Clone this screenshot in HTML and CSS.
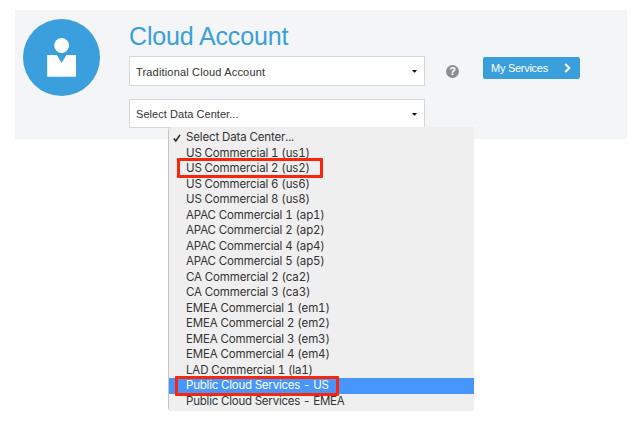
FILE: index.html
```html
<!DOCTYPE html>
<html lang="en">
<head>
<meta charset="utf-8">
<title>Cloud Account</title>
<link rel="stylesheet" href="styles.css">
</head>
<body>
<main class="panel">
  <svg class="avatar" viewBox="0 0 77 77" aria-hidden="true">
    <circle cx="38.5" cy="38.5" r="38.5" fill="#3a9fdc"/>
    <circle cx="38.6" cy="26.5" r="7.4" fill="#fff"/>
    <path d="M24.2 36H33.8L38.6 44L43.4 36H53V57.8H24.2Z" fill="#fff"/>
  </svg>
  <section class="form">
    <h1 class="title">Cloud Account</h1>
    <div class="select first"><span>Traditional Cloud Account</span><svg class="caret" viewBox="0 0 5 3"><path d="M0 0H5L3 2.5H2Z"/></svg></div>
    <div class="select second">
      <span>Select Data Center...</span><svg class="caret" viewBox="0 0 5 3"><path d="M0 0H5L3 2.5H2Z"/></svg>
      <ul class="menu">
        <li><svg class="check" viewBox="0 0 8 8"><path d="M.8 4.5L2.8 7L7 .8"/></svg><span>Select Data Center...</span></li>
        <li><span>US Commercial 1 (us1)</span></li>
        <li><span>US Commercial 2 (us2)</span><i class="mark mark-us2"></i></li>
        <li><span>US Commercial 6 (us6)</span></li>
        <li><span>US Commercial 8 (us8)</span></li>
        <li><span>APAC Commercial 1 (ap1)</span></li>
        <li><span>APAC Commercial 2 (ap2)</span></li>
        <li><span>APAC Commercial 4 (ap4)</span></li>
        <li><span>APAC Commercial 5 (ap5)</span></li>
        <li><span>CA Commercial 2 (ca2)</span></li>
        <li><span>CA Commercial 3 (ca3)</span></li>
        <li><span>EMEA Commercial 1 (em1)</span></li>
        <li><span>EMEA Commercial 2 (em2)</span></li>
        <li><span>EMEA Commercial 3 (em3)</span></li>
        <li><span>EMEA Commercial 4 (em4)</span></li>
        <li><span>LAD Commercial 1 (la1)</span></li>
        <li class="public active"><span>Public Cloud Services - US</span><i class="mark mark-public"></i></li>
        <li class="public"><span>Public Cloud Services - EMEA</span></li>
      </ul>
    </div>
  </section>
  <span class="help">?</span>
  <div class="button"><span>My Services</span><svg class="chevron" viewBox="0 0 7 10"><path d="M1.3 1L5.3 5L1.3 9"/></svg></div>
</main>
</body>
</html>
```
FILE: styles.css
```css
* { box-sizing: border-box; }
body {
  margin: 0;
  padding: 10px 7px 0 15px;
  height: 421px;
  overflow: hidden;
  background: #fff;
  font-family: "Liberation Sans", Arial, sans-serif;
  color: #333;
}
.panel {
  display: flex;
  align-items: flex-start;
  height: 129px;
  background: #f3f5f7;
}
.avatar {
  width: 77px;
  height: 77px;
  margin: 9px 29px 0 8px;
  flex: none;
}
.form { width: 296px; flex: none; }
.title {
  margin: 0;
  height: 46px;
  padding-top: 11px;
  font-size: 25px;
  line-height: 30px;
  font-weight: 400;
  letter-spacing: -0.15px;
  color: #3a9fdc;
  white-space: nowrap;
}
.select {
  position: relative;
  display: flex;
  align-items: center;
  justify-content: space-between;
  height: 30px;
  padding: 1px 7px 0 6px;
  border: 1px solid #d5d7d9;
  background: #fff;
  font-size: 11px;
}
.first { letter-spacing: 0.17px; }
.second { margin-top: 13px; height: 29px; letter-spacing: 0.05px; }
.caret { width: 5px; height: 3px; fill: #111; }
.menu {
  position: absolute;
  z-index: 2;
  left: 38px;
  top: 27px;
  width: 306px;
  height: 284px;
  margin: 0;
  padding: 3px 0 0;
  list-style: none;
  background: #efefef;
  border-left: 1px solid #c4c4c4;
  border-radius: 4px 0 0 4px;
  font-family: Inter, sans-serif;
  font-size: 11.5px;
  font-variant-numeric: tabular-nums;
  letter-spacing: -0.14px;
  color: #333;
}
.menu li {
  position: relative;
  height: 15.53px;
  padding-left: 17px;
  line-height: 15.53px;
  white-space: nowrap;
}
.menu .public { letter-spacing: -0.21px; }
.menu .active { background: #4696fd; color: #fff; }
.check {
  position: absolute;
  left: 4px;
  top: 4px;
  width: 8px;
  height: 8px;
  fill: none;
  stroke: #222;
  stroke-width: 1.5;
}
.mark {
  position: absolute;
  border: 3px solid #fb2509;
  border-radius: 1px;
}
.mark-us2 { left: 8px; top: -3px; width: 146px; height: 20px; }
.mark-public { left: 6px; top: -2px; width: 164px; height: 20px; }
.help {
  width: 13px;
  height: 13px;
  margin: 55px 0 0 21px;
  border-radius: 50%;
  background: #8b8f92;
  color: #fff;
  font-size: 11px;
  font-weight: 700;
  line-height: 13px;
  text-align: center;
}
.button {
  display: flex;
  align-items: center;
  justify-content: space-between;
  width: 97px;
  height: 22px;
  margin: 47px 0 0 24px;
  padding: 0 9px 0 8px;
  border-radius: 2px;
  background: #3a9fdc;
  color: #fff;
  font-size: 11px;
  letter-spacing: -0.27px;
  white-space: nowrap;
}
.chevron { width: 7px; height: 10px; fill: none; stroke: #fff; stroke-width: 2; }
```
